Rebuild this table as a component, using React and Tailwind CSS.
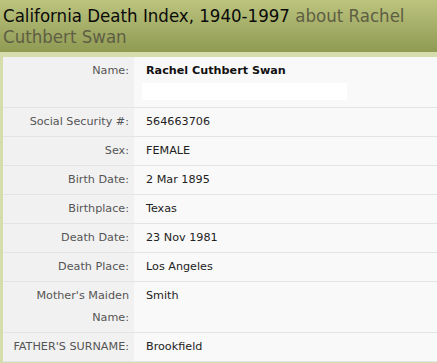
import React from "react";

const rows = [
  { label: "Social Security #:", value: "564663706" },
  { label: "Sex:", value: "FEMALE" },
  { label: "Birth Date:", value: "2 Mar 1895" },
  { label: "Birthplace:", value: "Texas" },
  { label: "Death Date:", value: "23 Nov 1981" },
  { label: "Death Place:", value: "Los Angeles" },
  { label: "Mother's Maiden Name:", value: "Smith" },
  { label: "FATHER'S SURNAME:", value: "Brookfield" },
];

const Row = ({ label, children }) => (
  <div className="grid grid-cols-[131px_1fr] border-b border-[#e4e4e4]">
    <div className="bg-[#f1f1f1] text-right pr-[5px] pl-2 py-[3px] text-[#555555] leading-[22px]">
      {label}
    </div>
    <div className="bg-[#f9f9f9] pl-[12px] py-[3px] text-[#222222] leading-[22px]">
      {children}
    </div>
  </div>
);

export default function App() {
  return (
    <div className="w-[437px] h-[363px] overflow-hidden bg-[#d6dcab]">
      {/* record title */}
      <div className="h-[52px] bg-gradient-to-b from-[#bcc47e] to-[#8f9a53] px-[3px] pt-[5px]">
        <h1 className="text-[18.5px] leading-[21px] text-[#0a0a0a] font-['DejaVu_Sans_Condensed','DejaVu_Sans',sans-serif]">
          California Death Index, 1940-1997{" "}
          <span className="text-[#5e5e44]">about Rachel Cuthbert Swan</span>
        </h1>
      </div>

      <div className="mt-[5px] ml-[3px] text-[11.2px] font-['DejaVu_Sans',Verdana,sans-serif]">
        <div className="grid grid-cols-[131px_1fr] border-b border-[#e4e4e4]">
          <div className="bg-[#f1f1f1] text-right pr-[5px] py-[3px] text-[#555555] leading-[22px]">
            Name:
          </div>
          <div className="bg-[#f9f9f9] pl-[8px] py-[3px]">
            <div className="pl-[4px] font-bold text-[#111111] leading-[22px]">Rachel Cuthbert Swan</div>
            <div className="mt-[1px] mb-[4px] w-[205px] h-[17px] bg-white"></div>
          </div>
        </div>
        {rows.map((r) => (
          <Row key={r.label} label={r.label}>
            {r.value}
          </Row>
        ))}
      </div>
    </div>
  );
}
